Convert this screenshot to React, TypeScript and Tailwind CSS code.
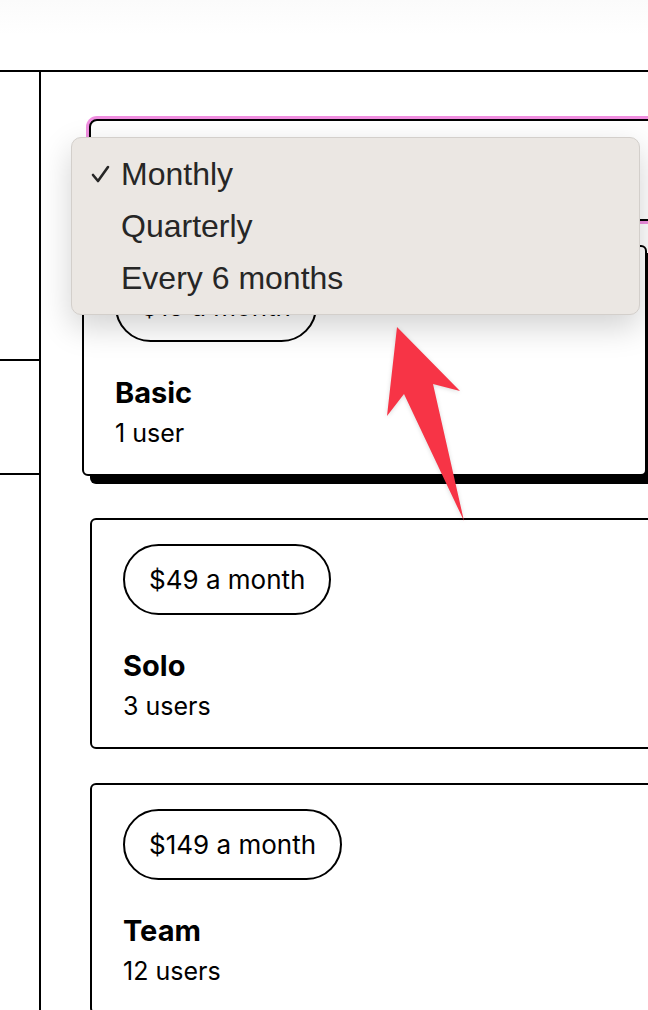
import React from 'react';

type Plan = { price: string; name: string; users: string; selected?: boolean };

const plans: Plan[] = [
  { price: '$15 a month', name: 'Basic', users: '1 user', selected: true },
  { price: '$49 a month', name: 'Solo', users: '3 users' },
  { price: '$149 a month', name: 'Team', users: '12 users' },
];

const PlanCard: React.FC<{ plan: Plan }> = ({ plan }) => (
  <div
    className={`ml-px flex h-[231px] w-[565px] shrink-0 flex-col rounded-md border-2 border-black bg-white px-[31px] pt-[24px] ${
      plan.selected ? '-translate-x-2 -translate-y-2 shadow-[8px_8px_0_#000]' : ''
    }`}
  >
    <div className="flex h-[71px] self-start items-center rounded-full border-2 border-black px-[24px] text-[26px] text-black">
      {plan.price}
    </div>
    <div className="mt-[34px] text-[29px] font-bold leading-[34px] text-black">{plan.name}</div>
    <div className="mt-[7px] text-[25px] leading-[32px] text-black">{plan.users}</div>
  </div>
);

export default function App() {
  return (
    <div
      className="relative h-[1010px] w-[648px] overflow-hidden bg-white"
      style={{ fontFamily: 'Inter, "Noto Sans", sans-serif' }}
    >
      {/* header strip */}
      <header className="h-[72px] border-b-2 border-black bg-gradient-to-b from-[#fbfbfb] via-white to-white" />

      <div className="flex">
        {/* left rail */}
        <aside className="flex h-[938px] w-[41px] shrink-0 flex-col border-r-2 border-black">
          <div className="h-[289px] border-b-2 border-black" />
          <div className="h-[114px] border-b-2 border-black" />
        </aside>

        {/* main column */}
        <main className="flex flex-col pl-[48px] pt-[47px]">
          <div className="h-[102px] w-[570px] shrink-0 rounded-lg border-2 border-black bg-white ring-[3px] ring-[#f08ee0]" />
          <div className="mt-[32px] flex flex-col gap-[34px]">
            {plans.map(p => (
              <PlanCard key={p.name} plan={p} />
            ))}
          </div>
        </main>
      </div>

      {/* native select popup */}
      <div
        className="absolute left-[71px] top-[137px] flex h-[178px] w-[569px] flex-col rounded-[10px] border border-[#d3cfcb] bg-[#ebe7e3] pt-[10px] text-[32px] leading-[52px] text-[#262626] shadow-[0_12px_32px_rgba(0,0,0,0.18)]"
        style={{ fontFamily: '"Liberation Sans", Arial, sans-serif' }}
      >
        <div className="flex items-center">
          <span className="flex w-[49px] pl-[19px]">
            <svg width="19" height="18" viewBox="0 0 19 18" fill="none" stroke="#262626" strokeWidth="2.6" strokeLinecap="round" strokeLinejoin="round">
              <path d="M2 10 L7 16 L17 2" />
            </svg>
          </span>
          <span>Monthly</span>
        </div>
        <div className="pl-[49px]">Quarterly</div>
        <div className="pl-[49px]">Every 6 months</div>
      </div>

      {/* annotation arrow */}
      <svg className="absolute left-0 top-0" width="648" height="1010" viewBox="0 0 648 1010">
        <polygon
          points="397,327 460,391 433,384 464,521 404,394 387,416"
          fill="#f73446"
          style={{ filter: 'drop-shadow(0 1px 2px rgba(0,0,0,0.15))' }}
        />
      </svg>
    </div>
  );
}
